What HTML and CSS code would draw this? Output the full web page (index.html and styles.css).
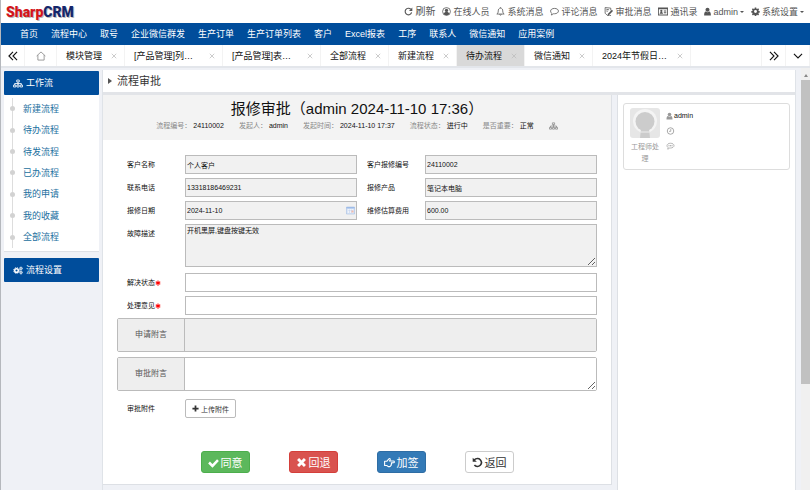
FILE: index.html
```html
<!DOCTYPE html>
<html lang="zh-CN">
<head>
    <meta charset="UTF-8">
    <meta name="viewport" content="width=device-width, initial-scale=1.0">
    <title>流程审批 - SharpCRM</title>
    <link rel="stylesheet" href="styles.css">
</head>
<body>
    <svg class="sprite" aria-hidden="true">
        <symbol id="i-refresh" viewBox="0 0 16 16"><path d="M13.5 9.5A5.8 5.8 0 1 1 12 4" fill="none" stroke="currentColor" stroke-width="2"/><path d="M14.8 1v6h-6z"/></symbol>
        <symbol id="i-user-circle" viewBox="0 0 16 16"><circle cx="8" cy="8" r="7" fill="none" stroke="currentColor" stroke-width="1.4"/><circle cx="8" cy="6" r="3"/><path d="M3 12.500c.5-2.500 2-3.500 5-3.500s4.500 1 5 3.500c-1.500 1.500-3 2-5 2s-3.500-.5-5-2z"/></symbol>
        <symbol id="i-bell" viewBox="0 0 16 16"><path d="M8 2C5 2 4 4.500 4 7c0 3-1 4.500-2.500 5.500h13C13 11.500 12 10 12 7c0-2.500-1-5-4-5zM8 .5V2M6.500 13c0 2 3 2 3 0" fill="none" stroke="currentColor" stroke-width="1.400"/></symbol>
        <symbol id="i-comment" viewBox="0 0 16 16"><path d="M8 2.500c4 0 7 2 7 4.700s-3 4.800-7 4.800l-1.500-.1C5 13.500 3.500 14 2 14.200c.8-.9 1.200-1.800 1.300-3C1.800 10.200 1 8.800 1 7.200c0-2.700 3-4.700 7-4.700z" fill="none" stroke="currentColor" stroke-width="1.400"/></symbol>
        <symbol id="i-commenting" viewBox="0 0 16 16"><path d="M8 2.500c4 0 7 2 7 4.700s-3 4.800-7 4.800l-1.500-.1C5 13.500 3.500 14 2 14.200c.8-.9 1.200-1.800 1.300-3C1.800 10.200 1 8.800 1 7.200c0-2.700 3-4.700 7-4.700z" fill="none" stroke="currentColor" stroke-width="1.400"/><path d="M4 6.500h2v2H4zM7 6.500h2v2H7zM10 6.500h2v2h-2z"/></symbol>
        <symbol id="i-edit" viewBox="0 0 16 16"><path d="M12 6V2L2 1v10l4 4h3M4 4l5 1M4 7l3 .5M12.500 15h-3" fill="none" stroke="currentColor" stroke-width="1.400"/><path d="M14 5l2 2-7 7-3 1 1-3z"/></symbol>
        <symbol id="i-card" viewBox="0 0 18 16"><path fill-rule="evenodd" d="M0 1h18v14H0zM1.500 4v9.500h15V4z"/><circle cx="6" cy="7" r="2"/><path d="M3 12c0-4 6-4 6 0zM10.500 6H15v1.800h-4.500zM10.500 9.500H15v1.800h-4.500z"/></symbol>
        <symbol id="i-user" viewBox="0 0 12 16"><circle cx="6" cy="5" r="3.600"/><path d="M0 15c0-4 .8-6.500 3-6.800 2 1.500 4 1.500 6 0 2.200.3 3 2.800 3 6.800z"/></symbol>
        <symbol id="i-gear" viewBox="0 0 16 16"><path fill-rule="evenodd" d="M6.700 1h2.600l.4 2 1.200.5 1.700-1.200 1.800 1.800-1.200 1.700.5 1.200 2 .4v2.200l-2 .6-.5 1.200 1.200 1.700-1.800 1.800-1.700-1.200-1.200.5-.4 2H6.700l-.4-2-1.200-.5-1.700 1.200-1.800-1.800 1.200-1.700-.5-1.200-2-.6V7.400l2-.4.5-1.200-1.200-1.700 1.800-1.800 1.700 1.200L6.300 3zM8 5.500a2.600 2.600 0 1 0 0 5.200 2.600 2.600 0 0 0 0-5.200z"/></symbol>
        <symbol id="i-gears" viewBox="0 0 20 16"><circle cx="7" cy="8" r="3.600" fill="none" stroke="currentColor" stroke-width="3"/><circle cx="7" cy="8" r="5.700" fill="none" stroke="currentColor" stroke-width="2" stroke-dasharray="2.400 2.080"/><circle cx="16" cy="4" r="1.900" fill="none" stroke="currentColor" stroke-width="2"/><circle cx="16" cy="4" r="3.200" fill="none" stroke="currentColor" stroke-width="1.200" stroke-dasharray="1.500 1"/><circle cx="16" cy="12" r="1.900" fill="none" stroke="currentColor" stroke-width="2"/><circle cx="16" cy="12" r="3.200" fill="none" stroke="currentColor" stroke-width="1.200" stroke-dasharray="1.500 1"/></symbol>
        <symbol id="i-sitemap" viewBox="0 0 18 16"><path d="M9 5v6M3 11V8h12v3M6.800 1.700h4.400v3.600H6.800zM1 10.700h4v3.600H1zM7 10.700h4v3.600H7zM13 10.700h4v3.600h-4z" fill="none" stroke="currentColor" stroke-width="1.500"/></symbol>
        <symbol id="i-left2" viewBox="0 0 16 16"><path d="M8 1.500 1.500 8 8 14.500M14.500 1.500 8 8l6.500 6.500" fill="none" stroke="currentColor" stroke-width="1.800"/></symbol>
        <symbol id="i-right2" viewBox="0 0 16 16"><path d="M8 1.500 14.500 8 8 14.500M1.500 1.500 8 8l-6.500 6.500" fill="none" stroke="currentColor" stroke-width="1.800"/></symbol>
        <symbol id="i-down" viewBox="0 0 16 16"><path d="M1.500 4.500 8 11l6.500-6.500" fill="none" stroke="currentColor" stroke-width="1.800"/></symbol>
        <symbol id="i-home" viewBox="0 0 16 16"><path d="M1 8 8 1.500 15 8M3 6.500v8h10v-8" fill="none" stroke="currentColor" stroke-width="1.300"/></symbol>
        <symbol id="i-close" viewBox="0 0 16 16"><path d="m2 2 12 12M14 2 2 14" fill="none" stroke="currentColor" stroke-width="2"/></symbol>
        <symbol id="i-clock" viewBox="0 0 16 16"><circle cx="8" cy="8" r="6.500" fill="none" stroke="currentColor" stroke-width="1.700"/><path d="M8.500 4v4.700H5" fill="none" stroke="currentColor" stroke-width="1.500"/></symbol>
        <symbol id="i-star" viewBox="0 0 16 16"><path d="M8 1v14M2 4.500l12 7M14 4.500l-12 7" stroke="currentColor" stroke-width="2.800"/></symbol>
        <symbol id="i-plus" viewBox="0 0 16 16"><path d="M8 1v14M1 8h14" stroke="currentColor" stroke-width="4"/></symbol>
        <symbol id="i-check" viewBox="0 0 16 16"><path d="m1.500 8 5 5 8-8.500" fill="none" stroke="currentColor" stroke-width="3.600"/></symbol>
        <symbol id="i-times" viewBox="0 0 16 16"><path d="m3 3 10 10M13 3 3 13" stroke="currentColor" stroke-width="4.200"/></symbol>
        <symbol id="i-hand" viewBox="0 0 18 16"><path d="M1 6h3.500L8 2c1.200-1.200 2.700 0 2 1.800L9 5.500h6.500c2 0 2 3 0 3H12c1 1 .8 2-.3 2.500.6 1 0 2-.9 2.200 0 1-.6 1.500-1.600 1.500H7L4.500 13H1z" fill="none" stroke="currentColor" stroke-width="1.800" stroke-linejoin="round"/></symbol>
        <symbol id="i-undo" viewBox="0 0 16 16"><path d="M3 4.500C6 1.500 10 1.700 12 4s2.500 5.500 0 8-6.500 2.300-8.500-.2" fill="none" stroke="currentColor" stroke-width="2.300"/><path d="M1 1v6h6z"/></symbol>
        <symbol id="i-calendar" viewBox="0 0 18 16"><path d="M1 1h16v14H1z" fill="#dbe7f8" stroke="#98b4df"/><path d="M1 1h16v3H1z" fill="#9dbbe8"/><path d="M4 6h10v7H4z" fill="#fff"/><path d="M4 8h10M4 11h10M7 6v7M11 6v7" stroke="#bccdeb"/><path d="M11 8h4v4h-4z" fill="#f1b9ab"/></symbol>
    </svg>

    <header class="topbar">
        <a class="logo" href="#"><span class="logo-red">Sharp</span><span class="logo-blue">CRM</span></a>
        <ul class="tools">
            <li><a class="refresh" href="#"><svg class="icon"><use href="#i-refresh"/></svg>刷新</a></li>
            <li><a href="#"><svg class="icon"><use href="#i-user-circle"/></svg>在线人员</a></li>
            <li><a href="#"><svg class="icon"><use href="#i-bell"/></svg>系统消息</a></li>
            <li><a href="#"><svg class="icon"><use href="#i-comment"/></svg>评论消息</a></li>
            <li><a href="#"><svg class="icon"><use href="#i-edit"/></svg>审批消息</a></li>
            <li><a href="#"><svg class="icon icon-wide"><use href="#i-card"/></svg>通讯录</a></li>
            <li><a href="#"><svg class="icon icon-narrow"><use href="#i-user"/></svg>admin<span class="caret"></span></a></li>
            <li><a href="#"><svg class="icon"><use href="#i-gear"/></svg>系统设置<span class="caret"></span></a></li>
        </ul>
    </header>

    <nav>
        <ul>
            <li><a href="#">首页</a></li>
            <li><a href="#">流程中心</a></li>
            <li><a href="#">取号</a></li>
            <li><a href="#">企业微信群发</a></li>
            <li><a href="#">生产订单</a></li>
            <li><a href="#">生产订单列表</a></li>
            <li><a href="#">客户</a></li>
            <li><a href="#">Excel报表</a></li>
            <li><a href="#">工序</a></li>
            <li><a href="#">联系人</a></li>
            <li><a href="#">微信通知</a></li>
            <li><a href="#">应用案例</a></li>
        </ul>
    </nav>

    <div class="tabs">
        <button type="button" class="tab-ctrl" aria-label="向左"><svg class="icon"><use href="#i-left2"/></svg></button>
        <a class="tab-home" href="#" aria-label="主页"><svg class="icon"><use href="#i-home"/></svg></a>
        <div class="tab"><a href="#">模块管理</a><button type="button" aria-label="关闭"><svg class="icon"><use href="#i-close"/></svg></button></div>
        <div class="tab tab-long"><a href="#">[产品管理]列…</a><button type="button" aria-label="关闭"><svg class="icon"><use href="#i-close"/></svg></button></div>
        <div class="tab tab-long"><a href="#">[产品管理]表…</a><button type="button" aria-label="关闭"><svg class="icon"><use href="#i-close"/></svg></button></div>
        <div class="tab"><a href="#">全部流程</a><button type="button" aria-label="关闭"><svg class="icon"><use href="#i-close"/></svg></button></div>
        <div class="tab"><a href="#">新建流程</a><button type="button" aria-label="关闭"><svg class="icon"><use href="#i-close"/></svg></button></div>
        <div class="tab active"><a href="#">待办流程</a><button type="button" aria-label="关闭"><svg class="icon"><use href="#i-close"/></svg></button></div>
        <div class="tab"><a href="#">微信通知</a><button type="button" aria-label="关闭"><svg class="icon"><use href="#i-close"/></svg></button></div>
        <div class="tab tab-long"><a href="#">2024年节假日…</a><button type="button" aria-label="关闭"><svg class="icon"><use href="#i-close"/></svg></button></div>
        <div class="tabs-end">
            <button type="button" class="tab-ctrl" aria-label="向右"><svg class="icon"><use href="#i-right2"/></svg></button>
            <button type="button" class="tab-ctrl" aria-label="更多"><svg class="icon"><use href="#i-down"/></svg></button>
        </div>
    </div>

    <div class="page">
        <aside class="sidebar">
            <h2><svg class="icon"><use href="#i-sitemap"/></svg>工作流</h2>
            <ul>
                <li><a href="#">新建流程</a></li>
                <li><a href="#">待办流程</a></li>
                <li><a href="#">待发流程</a></li>
                <li><a href="#">已办流程</a></li>
                <li><a href="#">我的申请</a></li>
                <li><a href="#">我的收藏</a></li>
                <li><a href="#">全部流程</a></li>
            </ul>
            <h2><svg class="icon"><use href="#i-gears"/></svg>流程设置</h2>
        </aside>

        <main>
            <div class="crumb"><span class="crumb-arrow"></span>流程审批</div>
            <div class="columns">
                <section class="panel">
                    <div class="panel-head">
                        <h1>报修审批（admin 2024-11-10 17:36）</h1>
                        <ul class="meta">
                            <li>流程编号：<b>24110002</b></li>
                            <li>发起人：<b>admin</b></li>
                            <li>发起时间：<b>2024-11-10 17:37</b></li>
                            <li>流程状态：<b>进行中</b></li>
                            <li>是否重要：<b>正常</b></li>
                            <li><svg class="icon"><use href="#i-sitemap"/></svg></li>
                        </ul>
                    </div>

                    <form>
                        <div class="fields">
                            <label for="customer">客户名称</label>
                            <input type="text" id="customer" value="个人客户" readonly>
                            <label for="code">客户报修编号</label>
                            <input type="text" id="code" value="24110002" readonly>

                            <label for="phone">联系电话</label>
                            <input type="text" id="phone" value="13318186469231" readonly>
                            <label for="product">报修产品</label>
                            <input type="text" id="product" value="笔记本电脑" readonly>

                            <label for="date">报修日期</label>
                            <div class="date-field">
                                <input type="text" id="date" value="2024-11-10" readonly>
                                <svg class="icon"><use href="#i-calendar"/></svg>
                            </div>
                            <label for="cost">维修估算费用</label>
                            <input type="text" id="cost" value="600.00" readonly>

                            <label for="fault">故障描述</label>
                            <textarea class="wide fault" id="fault" readonly>开机黑屏,键盘按键无效</textarea>

                            <label for="state">解决状态<svg class="icon required"><use href="#i-star"/></svg></label>
                            <input class="wide" type="text" id="state">

                            <label for="opinion">处理意见<svg class="icon required"><use href="#i-star"/></svg></label>
                            <input class="wide" type="text" id="opinion">
                        </div>

                        <div class="note note-readonly">
                            <label for="applyNote">申请附言</label>
                            <textarea id="applyNote" readonly></textarea>
                        </div>
                        <div class="note">
                            <label for="auditNote">审批附言</label>
                            <textarea id="auditNote"></textarea>
                        </div>

                        <div class="attach">
                            <span class="attach-label">审批附件</span>
                            <button type="button" class="upload"><svg class="icon"><use href="#i-plus"/></svg>上传附件</button>
                        </div>

                        <div class="actions">
                            <button type="button" class="btn btn-green"><svg class="icon"><use href="#i-check"/></svg>同意</button>
                            <button type="button" class="btn btn-red"><svg class="icon"><use href="#i-times"/></svg>回退</button>
                            <button type="button" class="btn btn-blue"><svg class="icon"><use href="#i-hand"/></svg>加签</button>
                            <button type="button" class="btn"><svg class="icon"><use href="#i-undo"/></svg>返回</button>
                        </div>
                    </form>
                </section>

                <section class="history">
                    <div class="card">
                        <div class="person">
                            <svg class="avatar" viewBox="0 0 30 30"><rect width="30" height="30" rx="3" fill="#e6e6e6"/><circle cx="15" cy="13" r="12" fill="#f4f4f4"/><circle cx="15" cy="13.500" r="9.500" fill="#ccc"/><path d="M11 21h8l1 9H10z" fill="#ccc"/><path d="M10.500 24h9" stroke="#eee"/></svg>
                            <p>工程师处理</p>
                        </div>
                        <ul>
                            <li><svg class="icon icon-narrow"><use href="#i-user"/></svg>admin</li>
                            <li><svg class="icon"><use href="#i-clock"/></svg></li>
                            <li><svg class="icon"><use href="#i-commenting"/></svg></li>
                        </ul>
                    </div>
                </section>
            </div>
        </main>

        <div class="scrollbar"><span class="scroll-up"></span><span class="scroll-thumb"></span></div>
    </div>
</body>
</html>
```
FILE: styles.css
```css
* {
    margin: 0;
    padding: 0;
    box-sizing: border-box;
}

body {
    font-family: 'Liberation Sans', 'Noto Sans CJK SC', sans-serif;
    font-size: 9px;
    line-height: 12px;
    background-color: #eff1f6;
    color: #111;
    min-height: 100vh;
    display: flex;
    flex-direction: column;
    border-left: 1px solid #b5b8bd;
}

ul {
    list-style: none;
}

a {
    color: inherit;
    text-decoration: none;
}

input,
textarea,
button {
    font-family: inherit;
    color: inherit;
}

button {
    border: none;
    background: none;
    cursor: pointer;
}

.sprite {
    display: none;
}

.icon {
    width: 9px;
    height: 9px;
    flex: none;
    fill: currentColor;
}

.icon-narrow {
    width: 7px;
}

.icon-wide {
    width: 10px;
}

/* 顶部 */
.topbar {
    height: 23px;
    display: flex;
    justify-content: space-between;
    align-items: center;
    padding: 0 6px 0 5px;
    background: white;
}

.logo {
    font-family: 'Roboto', sans-serif;
    font-size: 14px;
    font-weight: 900;
    line-height: 20px;
    text-shadow: 1px 1px 0 #bbb;
}

.logo-red {
    color: #d3141b;
}

.logo-blue {
    color: #14266b;
}

.tools {
    display: flex;
    gap: 7px;
    color: #555;
}

.tools a {
    display: flex;
    align-items: center;
    gap: 2px;
}

.tools .refresh {
    font-size: 10px;
}

.caret {
    border: 2px solid transparent;
    border-top-color: #555;
    border-bottom: none;
}

/* 导航 */
nav {
    background: #004d9b;
    color: white;
    padding: 0 19px;
}

nav ul {
    display: flex;
    gap: 13px;
}

nav a {
    line-height: 22px;
}

/* 标签页 */
.tabs {
    display: flex;
    height: 23px;
    background: white;
    border-bottom: 2px solid #e3e6eb;
}

.tab,
.tab-home,
.tab-ctrl {
    display: flex;
    align-items: center;
    border-right: 1px solid #f3f3f3;
}

.tab-ctrl {
    width: 24px;
    justify-content: center;
}

.tab-home {
    width: 32px;
    justify-content: center;
    color: #888;
}

.tab-ctrl .icon,
.tab-home .icon {
    width: 10px;
    height: 10px;
}

.tab {
    width: 68px;
    justify-content: space-between;
    padding: 0 7px 0 9px;
    white-space: nowrap;
}

.tab-long {
    width: 98px;
}

.tab button {
    display: flex;
    color: #bbb;
}

.tab button .icon {
    width: 6px;
    height: 6px;
}

.tab.active {
    background: #d9d9d9;
}

.tabs-end {
    display: flex;
    margin-left: auto;
    border-left: 1px solid #f3f3f3;
}

/* 主体 */
.page {
    flex: 1;
    display: flex;
}

.sidebar {
    width: 98px;
    flex: none;
    padding: 3px 0 0 3px;
}

.sidebar h2 {
    display: flex;
    align-items: center;
    gap: 3px;
    height: 24px;
    padding-left: 9px;
    background: #004d9b;
    color: white;
    font-size: 9px;
    font-weight: normal;
    border-radius: 1px;
}

.sidebar h2 .icon {
    width: 10px;
}

.sidebar ul {
    min-height: 157px;
    display: flex;
    flex-direction: column;
    margin-bottom: 6px;
    padding: 3px 0 3px 8px;
    background: white;
    border-bottom: 1px solid #dde0e5;
}

.sidebar li {
    flex: 1;
    display: flex;
    align-items: center;
    color: #1a6f9e;
    border-left: 1px solid #ddd;
}

.sidebar li::before {
    content: '';
    width: 5px;
    height: 5px;
    margin: 0 8px 0 -3px;
    border-radius: 50%;
    background: #d2d2d2;
}

main {
    flex: 1;
    display: flex;
    flex-direction: column;
    margin: 2px 5px 0 3px;
    border-left: 1px solid #dfe3e8;
    border-right: 1px solid #dfe3e8;
}

.crumb {
    display: flex;
    align-items: center;
    gap: 5px;
    height: 22px;
    padding-left: 5px;
    background: white;
    color: #333;
    font-size: 11px;
}

.crumb-arrow {
    border: 3px solid transparent;
    border-left: 4px solid #555;
    border-right: none;
}

.columns {
    flex: 1;
    display: flex;
    gap: 5px;
    border-top: 3px solid #e2e4e8;
}

.panel {
    flex: 1;
    align-self: flex-start;
    background: white;
    border-right: 1px solid #dde0e5;
    border-bottom: 1px solid #dde0e5;
}

.panel-head {
    padding: 3px 0 8px;
    background: #f3f3f3;
    text-align: center;
}

.panel-head h1 {
    font-size: 15px;
    line-height: 22px;
    font-weight: normal;
    color: #111;
}

.meta {
    display: flex;
    justify-content: center;
    gap: 15px;
    font-size: 7px;
    color: #888;
}

.meta li {
    display: flex;
    align-items: center;
    gap: 2px;
}

.meta b {
    font-weight: normal;
    color: #111;
}

.meta .icon {
    height: 8px;
}

/* 表单 */
form {
    padding: 15px 14px 11px;
}

.fields {
    display: grid;
    grid-template-columns: 68px 1fr 68px 1fr;
    row-gap: 4px;
    font-size: 7px;
    line-height: 19px;
}

.fields label {
    padding-left: 10px;
}

.fields input,
.fields textarea {
    width: 100%;
    height: 19px;
    padding: 0 1px;
    border: 1px solid #bbb;
    background: white;
    font-size: 7px;
}

.fields input:read-only,
.fields textarea:read-only {
    background: #f1f1f1;
}

.fields .wide {
    grid-column: 2 / 5;
}

.fields .fault {
    height: 43px;
    margin-bottom: 2px;
    line-height: 12px;
}

.date-field {
    display: flex;
    position: relative;
}

.date-field .icon {
    position: absolute;
    right: 2px;
    top: 5px;
}

.required {
    width: 6px;
    height: 6px;
    color: red;
    vertical-align: middle;
}

.note {
    display: flex;
    min-height: 34px;
    margin-top: 3px;
    border: 1px solid #bbb;
    border-radius: 2px;
}

.note + .note {
    margin-top: 5px;
}

.note label {
    width: 67px;
    display: flex;
    align-items: center;
    justify-content: center;
    background: #eee;
    border-right: 1px solid #bbb;
    color: #555;
    font-size: 8px;
}

.note textarea {
    flex: 1;
    height: 32px;
    border: none;
    background: white;
    font-size: 8px;
}

.note-readonly textarea {
    background: #eee;
    resize: none;
}

.attach {
    display: flex;
    align-items: center;
    margin-top: 8px;
    font-size: 7px;
}

.attach-label {
    width: 68px;
    padding-left: 10px;
}

.upload {
    display: flex;
    align-items: center;
    gap: 2px;
    height: 19px;
    padding: 0 6px;
    border: 1px solid #bbb;
    border-radius: 2px;
    font-size: 7px;
    color: #333;
}

.upload .icon {
    width: 7px;
    height: 7px;
}

.actions {
    display: flex;
    justify-content: center;
    gap: 39px;
    margin-top: 33px;
}

.btn {
    display: flex;
    align-items: center;
    gap: 2px;
    height: 22px;
    padding: 0 6px;
    border: 1px solid #ccc;
    border-radius: 3px;
    font-size: 11px;
    color: #333;
}

.btn .icon {
    width: 11px;
    height: 11px;
}

.btn-green {
    background: #5cb85c;
    border-color: #4cae4c;
    color: white;
}

.btn-red {
    background: #d9534f;
    border-color: #d43f3a;
    color: white;
}

.btn-blue {
    background: #337ab7;
    border-color: #2e6da4;
    color: white;
}

/* 审批记录 */
.history {
    width: 178px;
    padding: 8px 5px;
    background: white;
    border-left: 1px solid #dde0e5;
}

.card {
    display: flex;
    gap: 6px;
    padding: 4px 6px;
    border: 1px solid #ddd;
    border-radius: 3px;
    min-height: 67px;
}

.person {
    width: 30px;
    text-align: center;
    font-size: 7px;
    color: #999;
}

.avatar {
    display: block;
    width: 30px;
    height: 30px;
    margin-bottom: 3px;
}

.card li {
    display: flex;
    align-items: center;
    gap: 1px;
    height: 15px;
    font-size: 7px;
}

.card .icon {
    height: 8px;
    color: #999;
}

/* 滚动条 */
.scrollbar {
    width: 9px;
    display: flex;
    flex-direction: column;
    background: #f0f0f0;
}

.scroll-up {
    align-self: center;
    margin: 6px 0 3px;
    border: 2px solid transparent;
    border-bottom: 3px solid #888;
    border-top: none;
}

.scroll-thumb {
    height: 72%;
    background: #c1c1c1;
}
```
